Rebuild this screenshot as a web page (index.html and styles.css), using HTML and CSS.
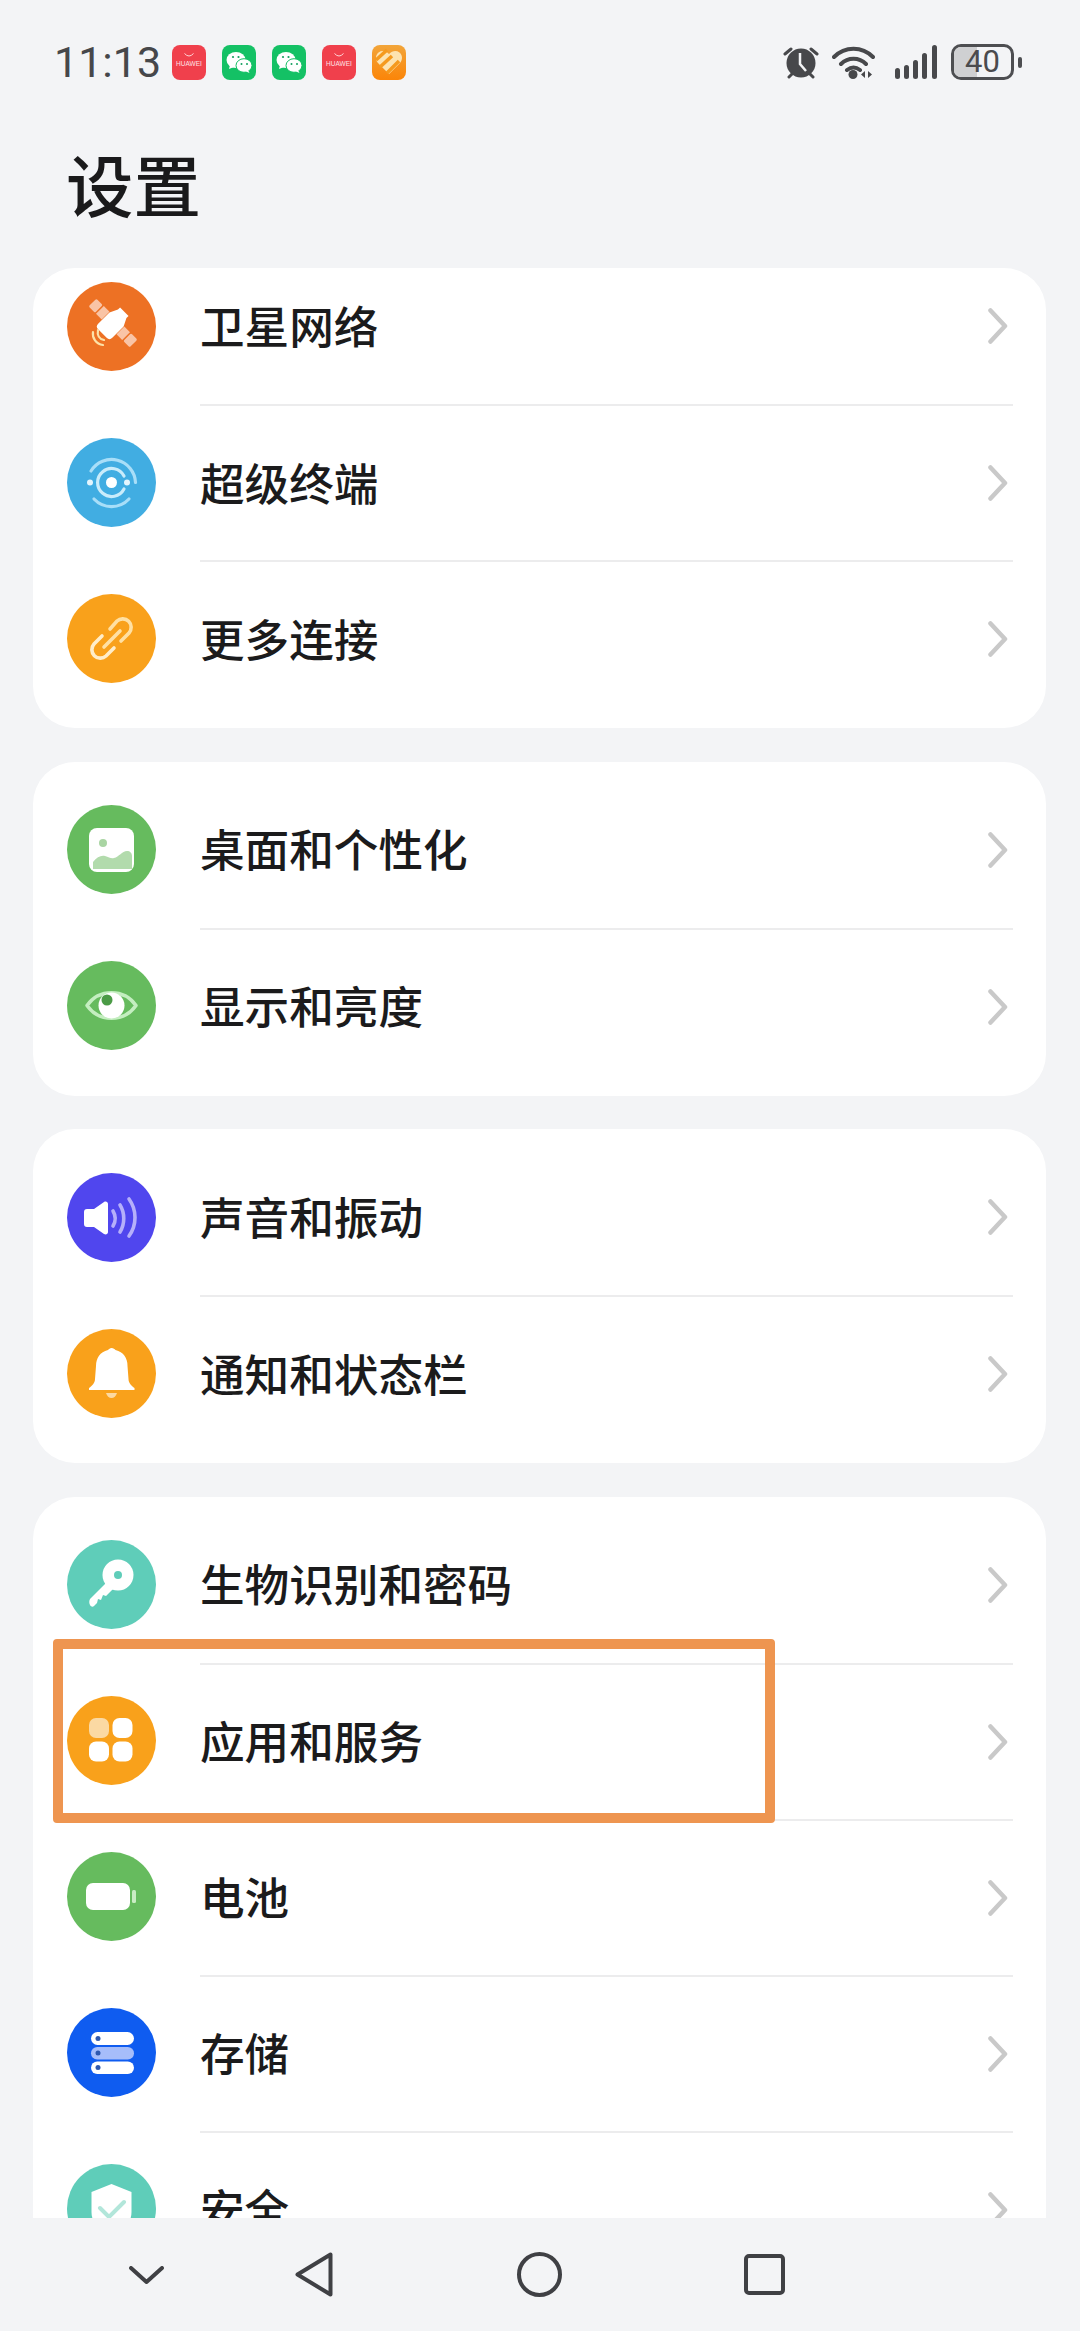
FILE: index.html
```html
<!DOCTYPE html>
<html lang="zh-CN">
<head>
    <meta charset="UTF-8">
    <meta name="viewport" content="width=device-width, initial-scale=1.0">
    <title>设置</title>
    <link rel="stylesheet" href="styles.css">
</head>
<body>
    <svg class="defs" width="0" height="0">
        <symbol id="huawei" viewBox="0 0 34 35">
            <rect width="34" height="35" rx="8" fill="#f0404c"/>
            <path d="M12.5 8.5q4.500 5 9 0" fill="none" stroke="#ffd5d8" stroke-width="1"/>
        </symbol>
        <symbol id="wechat" viewBox="0 0 34 35">
            <rect width="34" height="35" rx="8" fill="#14c165"/>
            <ellipse cx="14" cy="15" rx="9.500" ry="8" fill="#fff"/>
            <path d="M8 20l-1 4 5-2z" fill="#fff"/>
            <ellipse cx="22" cy="20.500" rx="8" ry="6.800" fill="#fff" stroke="#14c165"/>
            <path d="M26 25l1.500 3-4.500-2z" fill="#fff"/>
            <circle cx="11" cy="12" r="1.100" fill="#14a060"/>
            <circle cx="16.500" cy="12" r="1.100" fill="#14a060"/>
            <circle cx="19.500" cy="19" r="1" fill="#14a060"/>
            <circle cx="25" cy="19" r="1" fill="#14a060"/>
        </symbol>
        <symbol id="chevron" viewBox="0 0 20 36">
            <path d="M2.500 2.500L17 18 2.500 33.500" fill="none" stroke="#c9c9c9" stroke-width="4.500" stroke-linecap="round" stroke-linejoin="round"/>
        </symbol>
    </svg>

    <div class="status-bar">
        <div class="status-left">
            <span class="clock">11:13</span>
            <div class="app-icons">
                <span class="app-icon">
                    <svg width="34" height="35"><use href="#huawei"/></svg>
                    <span class="app-label">HUAWEI</span>
                </span>
                <svg width="34" height="35"><use href="#wechat"/></svg>
                <svg width="34" height="35"><use href="#wechat"/></svg>
                <span class="app-icon">
                    <svg width="34" height="35"><use href="#huawei"/></svg>
                    <span class="app-label">HUAWEI</span>
                </span>
                <svg width="34" height="35" viewBox="0 0 34 35">
                    <defs>
                        <linearGradient id="heartBg" x1="0" y1="0" x2="0" y2="1">
                            <stop offset="0" stop-color="#f2a53a"/>
                            <stop offset="1" stop-color="#fb8508"/>
                        </linearGradient>
                    </defs>
                    <rect width="34" height="35" rx="8" fill="url(#heartBg)"/>
                    <path d="M17 29L6 18c-3-3.500-2.500-8 .5-10.500 3.500-2.500 7.500-1.500 10.500 1.500 3-3 7-4 10.500-1.500 3 2.500 3.500 7 .5 10.500z" fill="#fde3b0"/>
                    <path d="M4 15L15 5M8 22L20 11M15 28l12-12" stroke="#f59a1e" stroke-width="3.500"/>
                </svg>
            </div>
        </div>
        <div class="status-right">
            <svg class="st-alarm" width="36" height="34" viewBox="0 0 36 34">
                <circle cx="18" cy="18" r="14.500" fill="#47484b"/>
                <path d="M2 9l6-5M34 9l-6-5M6 32l3-3M30 32l-3-3" stroke="#47484b" stroke-width="3" stroke-linecap="round"/>
                <path d="M17 8v11l6 7" fill="none" stroke="#f3f4f6" stroke-width="2.500"/>
            </svg>
            <svg class="st-wifi" width="43" height="34" viewBox="0 0 43 34">
                <path d="M2 12c11-11 28-11 39 0M9 19c7-7 18-7 25 0M15 25c4-3 9-3 13 0" fill="none" stroke="#47484b" stroke-width="4" stroke-linecap="round"/>
                <circle cx="21" cy="29.500" r="4.500" fill="#47484b"/>
                <path d="M33 26v7l-4-3.500zM36 26v7l4-3.500z" fill="#47484b"/>
            </svg>
            <svg class="st-signal" width="42" height="34" viewBox="0 0 42 34">
                <g fill="#47484b">
                    <rect x="0" y="23" width="5" height="11" rx="2.500"/>
                    <rect x="9" y="20" width="5" height="14" rx="2.500"/>
                    <rect x="18" y="15" width="5" height="19" rx="2.500"/>
                    <rect x="27" y="8" width="5" height="26" rx="2.500"/>
                    <rect x="37" y="0" width="5" height="34" rx="2.500"/>
                </g>
            </svg>
            <div class="battery">
                <div class="battery-body">
                    <span class="battery-fill"></span>
                    <span class="battery-level">40</span>
                </div>
                <span class="battery-nub"></span>
            </div>
        </div>
    </div>

    <h1 class="page-title">设置</h1>

    <main class="list">
        <section class="card">
            <div class="row row-clipped">
                <svg class="row-icon" viewBox="0 0 89 89">
                    <circle cx="44.500" cy="44.500" r="44.500" fill="#ed7124"/>
                    <g transform="rotate(45 46 41)">
                        <rect x="17" y="35.500" width="9" height="11" rx="1.500" fill="#f9c4a6"/>
                        <rect x="27.500" y="35.500" width="8" height="11" fill="#f9c4a6"/>
                        <rect x="56.500" y="35.500" width="8" height="11" fill="#f9c4a6"/>
                        <rect x="66" y="35.500" width="9" height="11" rx="1.500" fill="#f9c4a6"/>
                        <path d="M36 36l4-8v-3h12v3l4 8v16a4 4 0 0 1-4 4H40a4 4 0 0 1-4-4z" fill="#fff"/>
                    </g>
                    <path d="M26 50c-1 6 3 12 10 13M31 48c-1 5 1 9 6 10" fill="none" stroke="#fde2a8" stroke-width="2.200" stroke-linecap="round"/>
                </svg>
                <div class="row-body">
                    <span class="row-text">卫星网络</span>
                    <svg class="row-chevron"><use href="#chevron"/></svg>
                </div>
            </div>
            <div class="row">
                <svg class="row-icon" viewBox="0 0 89 89">
                    <circle cx="44.500" cy="44.500" r="44.500" fill="#41ade2"/>
                    <path d="M24 33A24 24 0 0 1 68.500 44.500M27 61A24 24 0 0 0 62 61" fill="none" stroke="#a8def8" stroke-width="3.200" stroke-linecap="round"/>
                    <path d="M57 38A14 14 0 1 0 57 51" fill="none" stroke="#c9ecfb" stroke-width="3.200" stroke-linecap="round"/>
                    <circle cx="44.500" cy="44.500" r="5.500" fill="#fff"/>
                    <circle cx="23" cy="44.500" r="3" fill="#e4f5fd"/>
                    <circle cx="60" cy="44.500" r="3" fill="#e4f5fd"/>
                </svg>
                <div class="row-body">
                    <span class="row-text">超级终端</span>
                    <svg class="row-chevron"><use href="#chevron"/></svg>
                </div>
            </div>
            <div class="row">
                <svg class="row-icon" viewBox="0 0 89 89">
                    <circle cx="44.500" cy="44.500" r="44.500" fill="#f9a11b"/>
                    <path d="M35 42L27 50a8.500 8.500 0 0 0 12 12l8-8" fill="none" stroke="#ffedc9" stroke-width="3.600" stroke-linecap="round"/>
                    <path d="M37 53l16-16M43 35l7-8a8.500 8.500 0 0 1 12 12l-8 8" fill="none" stroke="#ffe0a3" stroke-width="3.600" stroke-linecap="round"/>
                </svg>
                <div class="row-body">
                    <span class="row-text">更多连接</span>
                    <svg class="row-chevron"><use href="#chevron"/></svg>
                </div>
            </div>
        </section>

        <section class="card">
            <div class="row">
                <svg class="row-icon" viewBox="0 0 89 89">
                    <circle cx="44.500" cy="44.500" r="44.500" fill="#66bb5e"/>
                    <rect x="22" y="23" width="45" height="44" rx="8" fill="#fff"/>
                    <circle cx="36" cy="38" r="4" fill="#a9d5a3"/>
                    <path d="M26 64v-7c4-5 8-7 12-6 4 1 6 3 9 2 5-1 8-7 13-7 3 0 5 2 5 5v13z" fill="#b2dbac"/>
                </svg>
                <div class="row-body">
                    <span class="row-text">桌面和个性化</span>
                    <svg class="row-chevron"><use href="#chevron"/></svg>
                </div>
            </div>
            <div class="row">
                <svg class="row-icon" viewBox="0 0 89 89">
                    <circle cx="44.500" cy="44.500" r="44.500" fill="#66bb5e"/>
                    <path d="M20 44.500c12-17 37-17 49 0-12 17-37 17-49 0z" fill="#66bb5e" stroke="#c4eec0" stroke-width="3.500" stroke-linejoin="round"/>
                    <circle cx="44.500" cy="44.500" r="13" fill="#fff"/>
                    <circle cx="40" cy="39" r="5.500" fill="#4b9b46"/>
                </svg>
                <div class="row-body">
                    <span class="row-text">显示和亮度</span>
                    <svg class="row-chevron"><use href="#chevron"/></svg>
                </div>
            </div>
        </section>

        <section class="card">
            <div class="row">
                <svg class="row-icon" viewBox="0 0 89 89">
                    <circle cx="44.500" cy="44.500" r="44.500" fill="#5046ee"/>
                    <path d="M20 36h7l10-7c2-1 4 0 4 2v28c0 2-2 3-4 2l-10-7h-7c-2 0-3-1-3-3V39c0-2 1-3 3-3z" fill="#fff"/>
                    <path d="M46 38c3 5 3 10 0 15M53 32c5 8 5 19 0 27M62 26c8 11 8 26 0 37" fill="none" stroke="#b6b0fa" stroke-width="3.600" stroke-linecap="round"/>
                </svg>
                <div class="row-body">
                    <span class="row-text">声音和振动</span>
                    <svg class="row-chevron"><use href="#chevron"/></svg>
                </div>
            </div>
            <div class="row">
                <svg class="row-icon" viewBox="0 0 89 89">
                    <circle cx="44.500" cy="44.500" r="44.500" fill="#f9a11b"/>
                    <path d="M44.500 19c2 0 3 1 4 2 8 2 12 8 12 16l1 13c0 4 3 7 6 9v2H22v-2c3-2 6-5 6-9l1-13c0-8 4-14 12-16 1-1 2-2 3.500-2z" fill="#fff"/>
                    <path d="M39 64h11c-1 3-3 5-5.500 5S40 67 39 64z" fill="#fcd9a2"/>
                </svg>
                <div class="row-body">
                    <span class="row-text">通知和状态栏</span>
                    <svg class="row-chevron"><use href="#chevron"/></svg>
                </div>
            </div>
        </section>

        <section class="card">
            <div class="row">
                <svg class="row-icon" viewBox="0 0 89 89">
                    <circle cx="44.500" cy="44.500" r="44.500" fill="#5fcdb9"/>
                    <circle cx="51" cy="35" r="15.500" fill="#fff"/>
                    <path d="M42 40L23 59c-1 2-1 4 0 6 1 2 3 2 4 1l3-3 1-4 3 1 2-5 3 1 9-9z" fill="#fff"/>
                    <circle cx="51" cy="35" r="4" fill="#5fcdb9"/>
                </svg>
                <div class="row-body">
                    <span class="row-text">生物识别和密码</span>
                    <svg class="row-chevron"><use href="#chevron"/></svg>
                </div>
            </div>
            <div class="row">
                <svg class="row-icon" viewBox="0 0 89 89">
                    <circle cx="44.500" cy="44.500" r="44.500" fill="#f9a11b"/>
                    <rect x="22" y="22" width="20" height="20" rx="7" fill="#fbd9a3"/>
                    <rect x="45.500" y="22" width="20" height="20" rx="7" fill="#fff"/>
                    <rect x="22" y="45.500" width="20" height="20" rx="7" fill="#fff"/>
                    <rect x="45.500" y="45.500" width="20" height="20" rx="7" fill="#fff"/>
                </svg>
                <div class="row-body">
                    <span class="row-text">应用和服务</span>
                    <svg class="row-chevron"><use href="#chevron"/></svg>
                </div>
            </div>
            <div class="row">
                <svg class="row-icon" viewBox="0 0 89 89">
                    <circle cx="44.500" cy="44.500" r="44.500" fill="#66bb5e"/>
                    <rect x="19" y="31" width="44" height="27" rx="7" fill="#fff"/>
                    <rect x="65" y="38" width="4" height="13" rx="1.500" fill="#c9ecc4"/>
                </svg>
                <div class="row-body">
                    <span class="row-text">电池</span>
                    <svg class="row-chevron"><use href="#chevron"/></svg>
                </div>
            </div>
            <div class="row">
                <svg class="row-icon" viewBox="0 0 89 89">
                    <circle cx="44.500" cy="44.500" r="44.500" fill="#0f5cf0"/>
                    <rect x="24" y="24" width="43" height="13" rx="6.500" fill="#fff"/>
                    <rect x="24" y="39" width="43" height="12.500" rx="6.250" fill="#a6bdfa"/>
                    <rect x="24" y="53.500" width="43" height="12.500" rx="6.250" fill="#fff"/>
                    <circle cx="31" cy="30.500" r="2.500" fill="#2d58b0"/>
                    <circle cx="31" cy="45" r="2.500" fill="#2d58b0"/>
                    <circle cx="31" cy="59.500" r="2.500" fill="#2d58b0"/>
                </svg>
                <div class="row-body">
                    <span class="row-text">存储</span>
                    <svg class="row-chevron"><use href="#chevron"/></svg>
                </div>
            </div>
            <div class="row">
                <svg class="row-icon" viewBox="0 0 89 89">
                    <circle cx="44.500" cy="44.500" r="44.500" fill="#5fcdb9"/>
                    <path d="M44.500 20l20 8v20c0 12-9 20-20 24-11-4-20-12-20-24V28z" fill="#fff"/>
                    <path d="M33 44l9 9 15-15" fill="none" stroke="#b2e6da" stroke-width="4" stroke-linecap="round" stroke-linejoin="round"/>
                </svg>
                <div class="row-body">
                    <span class="row-text">安全</span>
                    <svg class="row-chevron"><use href="#chevron"/></svg>
                </div>
            </div>
        </section>
    </main>

    <nav class="nav-bar">
        <svg width="35" height="18" viewBox="0 0 35 18"><path d="M2 2l15.500 14L33 2" fill="none" stroke="#3f4044" stroke-width="4" stroke-linecap="round" stroke-linejoin="round"/></svg>
        <svg width="38" height="45" viewBox="0 0 38 45"><path d="M2.500 22.500L35.500 2.500v40z" fill="none" stroke="#3f4044" stroke-width="4" stroke-linejoin="round"/></svg>
        <svg width="45" height="45" viewBox="0 0 45 45"><circle cx="22.500" cy="22.500" r="20.500" fill="none" stroke="#3f4044" stroke-width="4"/></svg>
        <svg width="41" height="41" viewBox="0 0 41 41"><rect x="2" y="2" width="37" height="37" rx="3" fill="none" stroke="#3f4044" stroke-width="4"/></svg>
    </nav>

    <div class="highlight-box"></div>
</body>
</html>
```

FILE: styles.css
```css
html, body {
    margin: 0;
    padding: 0;
}
body {
    position: relative;
    display: flex;
    flex-direction: column;
    width: 1080px;
    height: 2331px;
    overflow: hidden;
    background-color: #f3f4f6;
    color: #1b1b1c;
    font-family: "Noto Sans CJK SC", "Noto Sans", sans-serif;
}
.defs {
    position: absolute;
}

/* status bar */
.status-bar {
    display: flex;
    justify-content: space-between;
    align-items: center;
    height: 36px;
    margin-top: 44px;
    padding: 0 58px 0 54px;
}
.status-left,
.status-right {
    display: flex;
    align-items: center;
}
.clock {
    width: 118px;
    font-family: Roboto, sans-serif;
    font-size: 43px;
    line-height: 36px;
    color: #46474a;
}
.app-icons {
    display: flex;
    gap: 16px;
}
.app-icon {
    position: relative;
    display: block;
    width: 34px;
    height: 35px;
}
.app-label {
    position: absolute;
    left: 0;
    right: 0;
    top: 15px;
    font-family: "Liberation Sans", sans-serif;
    font-size: 6.5px;
    line-height: 8px;
    text-align: center;
    color: #ffe3e5;
}
.st-alarm {
    margin-right: 13px;
}
.st-wifi {
    margin-right: 20px;
}
.st-signal {
    margin-right: 14px;
}
.battery {
    display: flex;
    align-items: center;
    gap: 4px;
}
.battery-body {
    position: relative;
    box-sizing: border-box;
    width: 63px;
    height: 36px;
    border: 3px solid #4d4e51;
    border-radius: 10px;
    overflow: hidden;
    text-align: center;
}
.battery-fill {
    position: absolute;
    left: 0;
    top: 0;
    bottom: 0;
    width: 40%;
    background-color: #cfd0d2;
}
.battery-level {
    position: relative;
    font-family: Roboto, sans-serif;
    font-size: 31px;
    line-height: 30px;
    color: #4a4b4e;
}
.battery-nub {
    width: 4px;
    height: 11px;
    border-radius: 2px;
    background-color: #4d4e51;
}

/* title */
.page-title {
    box-sizing: border-box;
    height: 188px;
    margin: 0;
    padding: 55px 0 0 66px;
    font-size: 67.5px;
    font-weight: 500;
    line-height: 96px;
    color: #1a1a1b;
}

/* settings list */
.list {
    flex: 1;
    min-height: 0;
    overflow: hidden;
    display: flex;
    flex-direction: column;
    gap: 33.5px;
    padding: 0 34px 0 33px;
}
.card {
    flex-shrink: 0;
    padding: 10px 0 12px;
    background-color: #fff;
    border-radius: 42px;
}
.row {
    display: flex;
    align-items: center;
    height: 156px;
    padding-left: 34px;
}
.row-icon {
    flex-shrink: 0;
    width: 89px;
    height: 89px;
}
.row-body {
    flex: 1;
    align-self: stretch;
    display: flex;
    align-items: center;
    justify-content: space-between;
    margin: 0 33px 0 44px;
    padding-right: 5px;
    border-top: 2px solid #ececed;
}
.row:first-child .row-body {
    border-top: none;
}
.row-text {
    padding-bottom: 3px;
    font-size: 44.6px;
    font-weight: 500;
    line-height: 60px;
}
.row-chevron {
    width: 20px;
    height: 36px;
}

/* first card is scrolled under the title, its first row is shorter */
.card:first-child {
    padding-top: 0;
}
.row-clipped {
    height: 116px;
    padding-bottom: 20px;
}

/* bottom navigation */
.nav-bar {
    flex-shrink: 0;
    display: grid;
    grid-template-columns: 166px 222px 227px auto;
    align-items: center;
    height: 113px;
    box-sizing: border-box;
    padding-left: 129px;
    background-color: #f3f4f6;
}

/* annotation drawn on top of the screenshot */
.highlight-box {
    position: absolute;
    left: 53px;
    top: 1639px;
    box-sizing: border-box;
    width: 722px;
    height: 184px;
    border: 10px solid #ee9550;
    border-radius: 4px;
}
```
